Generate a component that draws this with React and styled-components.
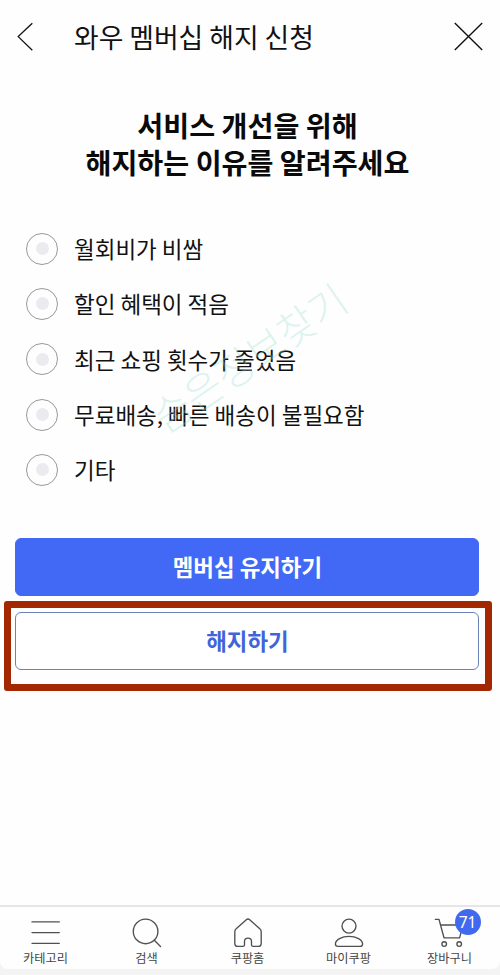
// src/App.jsx
import styled, { createGlobalStyle } from "styled-components";

const GlobalStyle = createGlobalStyle`
  * {
    box-sizing: border-box;
  }

  body {
    margin: 0;
    background: #fefefe;
    color: #111111;
    font-family: "Noto Sans CJK KR", "Noto Sans", sans-serif;
  }

  button {
    padding: 0;
    border: 0;
    background: none;
    font-family: inherit;
    color: inherit;
  }
`;

const Page = styled.div`
  display: flex;
  flex-direction: column;
  height: 975px;
  overflow: hidden;
`;

const Header = styled.header`
  display: flex;
  align-items: center;
  height: 74px;
  padding: 0 16px;
`;

const IconButton = styled.button`
  display: flex;
  width: ${({ $width }) => $width}px;
  height: 30px;
`;

const HeaderTitle = styled.h1`
  flex: 1;
  margin: 0 0 0 40px;
  font-size: 26.8px;
  font-weight: 400;
  line-height: 40px;
`;

const Question = styled.h2`
  margin: 32px 0 0;
  padding-right: 5px;
  font-size: 28.2px;
  font-weight: 700;
  line-height: 37px;
  text-align: center;
  color: #0a0a0a;
`;

const ReasonArea = styled.div`
  position: relative;
  margin-top: 41px;
`;

const ReasonList = styled.ul`
  margin: 0;
  padding: 0 0 0 26px;
  list-style: none;
`;

const Reason = styled.li`
  display: flex;
  align-items: center;
  gap: 16px;
  height: 55.3px;
  font-size: 22.5px;
  line-height: 32px;
`;

const ReasonLabel = styled.span`
  padding-bottom: 1px;
`;

const Radio = styled.span`
  display: flex;
  align-items: center;
  justify-content: center;
  width: 32px;
  height: 32px;
  border: 1px solid #999999;
  border-radius: 50%;

  &::after {
    content: "";
    width: 13px;
    height: 13px;
    border-radius: 50%;
    background: #ebebef;
  }
`;

const Watermark = styled.span`
  position: absolute;
  top: 111px;
  left: 119px;
  width: 260px;
  font-size: 40.8px;
  font-weight: 300;
  line-height: 50px;
  text-align: center;
  white-space: nowrap;
  color: rgba(150, 220, 205, 0.32);
  transform: rotate(-34.5deg);
  pointer-events: none;
`;

const Actions = styled.div`
  margin: 41px 8.5px 0 3.5px;
`;

const ActionButton = styled.button`
  display: block;
  width: 464px;
  height: 58px;
  padding-bottom: 2px;
  border: 1px solid ${({ $primary }) => ($primary ? "#4169f5" : "#6b83b5")};
  border-radius: 6px;
  background: ${({ $primary }) => ($primary ? "#4169f5" : "#ffffff")};
  color: ${({ $primary }) => ($primary ? "#ffffff" : "#4164d8")};
  font-size: 22.4px;
  font-weight: 700;
  line-height: 32px;
`;

const KeepRow = styled.div`
  padding-left: 11.9px;
`;

const Highlight = styled.div`
  height: 90px;
  margin-top: 4.5px;
  padding: 4px 0 0 4.9px;
  border: 7.5px solid #a32700;
  border-radius: 3px;
`;

const BottomArea = styled.div`
  margin-top: auto;
  background: #f4f4f4;
`;

const BottomNav = styled.nav`
  display: flex;
  height: 64px;
  border-top: 2px solid #e6e6e6;
  border-radius: 0 0 8px 8px;
  background: #fefefe;
`;

const BottomSpace = styled.div`
  height: 6px;
`;

const NavItem = styled.button`
  position: relative;
  display: flex;
  flex-direction: column;
  align-items: center;
  width: 101px;
  margin-left: ${({ $first }) => ($first ? "-5px" : "0")};
  padding-top: 10px;
  flex-shrink: 0;
  font-size: 12.2px;
  line-height: 18px;
  color: #454545;

  svg {
    display: block;
    margin-bottom: -2px;
  }
`;

const Badge = styled.span`
  position: absolute;
  top: 2px;
  left: 55.5px;
  width: 26px;
  height: 26px;
  border-radius: 50%;
  background: #4169f0;
  color: #ffffff;
  font-family: "Noto Sans", sans-serif;
  font-size: 15.5px;
  line-height: 26px;
  text-align: center;
`;

const NavIcon = ({ children }) => (
  <svg
    width="34"
    height="34"
    viewBox="0 0 34 34"
    fill="none"
    stroke="#505050"
    strokeWidth="1.35"
    strokeLinecap="round"
    strokeLinejoin="round"
  >
    {children}
  </svg>
);

const MenuIcon = () => (
  <NavIcon>
    <path d="M3 4.9H30.3M3 15.6H30.3M3 26.3H30.3" />
  </NavIcon>
);

const SearchIcon = () => (
  <NavIcon>
    <circle cx="15.6" cy="14.4" r="12.3" />
    <path d="M24.3 23.2L30.5 29.5" />
  </NavIcon>
);

const HomeIcon = () => (
  <NavIcon>
    <path d="M15.3 2.7L5.2 11.8Q3.8 13 3.8 14.8V26.4Q3.8 29.4 6.8 29.4H11.8Q13.5 29.4 13.5 27.8V24.6C13.5 20 20.5 20 20.5 24.6V27.8Q20.5 29.4 22.2 29.4H27.2Q30.2 29.4 30.2 26.4V14.8Q30.2 13 28.8 11.8L18.7 2.7Q17 1.2 15.3 2.7Z" />
  </NavIcon>
);

const UserIcon = () => (
  <NavIcon>
    <circle cx="17" cy="9.1" r="7" />
    <path d="M3.4 27C3.4 22.6 9.8 19.4 17 19.4S30.6 22.6 30.6 27Q30.6 29.4 28.2 29.4H5.8Q3.4 29.4 3.4 27Z" />
  </NavIcon>
);

const CartIcon = () => (
  <NavIcon>
    <path d="M2.4 2.4H6L11 20.8H26.6L30 8H7.6" />
    <circle cx="11.2" cy="27" r="2.3" />
    <circle cx="26.2" cy="27" r="2.3" />
  </NavIcon>
);

const reasons = [
  "월회비가 비쌈",
  "할인 혜택이 적음",
  "최근 쇼핑 횟수가 줄었음",
  "무료배송, 빠른 배송이 불필요함",
  "기타",
];

const navItems = [
  { label: "카테고리", Icon: MenuIcon },
  { label: "검색", Icon: SearchIcon },
  { label: "쿠팡홈", Icon: HomeIcon },
  { label: "마이쿠팡", Icon: UserIcon },
  { label: "장바구니", Icon: CartIcon, badge: 71 },
];

const App = () => {
  return (
    <>
      <GlobalStyle />
      <Page>
        <Header>
          <IconButton $width={18} aria-label="뒤로">
            <svg width="18" height="30" fill="none" stroke="#111111" strokeWidth="1.3">
              <path d="M16.3 1.2L2.2 14.6L16.3 28.2" />
            </svg>
          </IconButton>
          <HeaderTitle>와우 멤버십 해지 신청</HeaderTitle>
          <IconButton $width={30} aria-label="닫기">
            <svg width="30" height="30" fill="none" stroke="#111111" strokeWidth="1.4">
              <path d="M0.8 1L28.2 28M28.2 1L0.8 28" />
            </svg>
          </IconButton>
        </Header>

        <Question>
          서비스 개선을 위해
          <br />
          해지하는 이유를 알려주세요
        </Question>

        <ReasonArea>
          <ReasonList>
            {reasons.map((reason) => (
              <Reason key={reason}>
                <Radio />
                <ReasonLabel>{reason}</ReasonLabel>
              </Reason>
            ))}
          </ReasonList>
          <Watermark>숨은정보찾기</Watermark>
        </ReasonArea>

        <Actions>
          <KeepRow>
            <ActionButton $primary>멤버십 유지하기</ActionButton>
          </KeepRow>
          <Highlight>
            <ActionButton>해지하기</ActionButton>
          </Highlight>
        </Actions>

        <BottomArea>
          <BottomNav>
            {navItems.map(({ label, Icon, badge }, index) => (
              <NavItem key={label} $first={index === 0}>
                <Icon />
                {label}
                {badge && <Badge>{badge}</Badge>}
              </NavItem>
            ))}
          </BottomNav>
          <BottomSpace />
        </BottomArea>
      </Page>
    </>
  );
};

export default App;
